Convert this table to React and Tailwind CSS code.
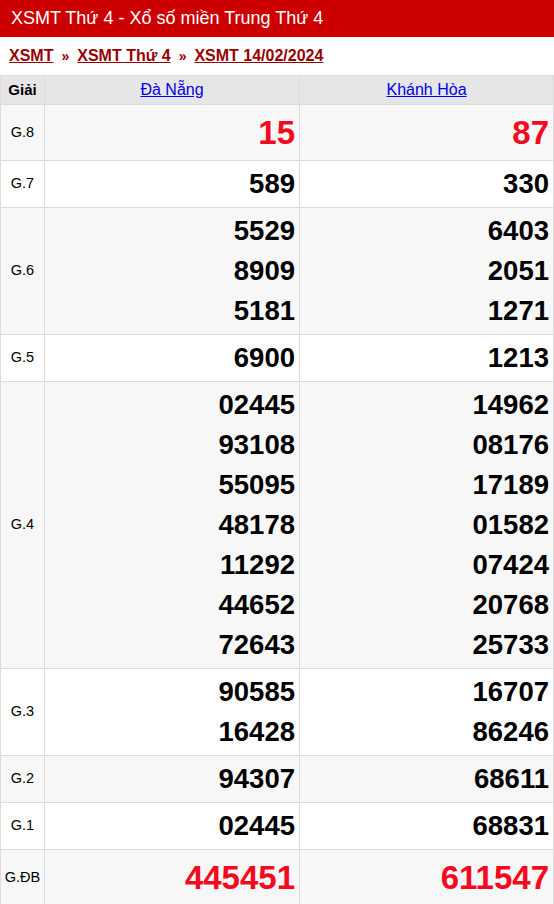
import React from "react";

const rows = [
  { label: "G.8", a: ["15"], b: ["87"], big: true },
  { label: "G.7", a: ["589"], b: ["330"] },
  { label: "G.6", a: ["5529", "8909", "5181"], b: ["6403", "2051", "1271"] },
  { label: "G.5", a: ["6900"], b: ["1213"] },
  {
    label: "G.4",
    a: ["02445", "93108", "55095", "48178", "11292", "44652", "72643"],
    b: ["14962", "08176", "17189", "01582", "07424", "20768", "25733"],
  },
  { label: "G.3", a: ["90585", "16428"], b: ["16707", "86246"] },
  { label: "G.2", a: ["94307"], b: ["68611"] },
  { label: "G.1", a: ["02445"], b: ["68831"] },
  { label: "G.ĐB", a: ["445451"], b: ["611547"], big: true },
];

function NumCell({ nums, big }) {
  return (
    <td className="border border-[#dcdcdc] px-[4px] py-[3px] text-right align-middle">
      {nums.map((n, i) => (
        <div
          key={i}
          className={
            big
              ? "text-[33px] leading-[49px] font-bold text-[#f5091f]"
              : "text-[27.5px] leading-[40px] font-bold text-black"
          }
        >
          {n}
        </div>
      ))}
    </td>
  );
}

export default function App() {
  return (
    <div className="w-[554px] bg-white font-['Liberation_Sans',Arial,sans-serif]">
      {/* Title bar */}
      <h1 className="h-[37px] bg-[#cc0000] pl-[11px] flex items-center text-[18px] text-white">
        XSMT Thứ 4 - Xổ số miền Trung Thứ 4
      </h1>

      {/* Breadcrumb */}
      <div className="h-[38px] flex items-center pl-[9px] text-[16px] font-bold text-[#990000]">
        <a href="#" className="underline">XSMT</a>
        <span className="mx-[8px] text-[14px]">»</span>
        <a href="#" className="underline">XSMT Thứ 4</a>
        <span className="mx-[8px] text-[14px]">»</span>
        <a href="#" className="underline">XSMT 14/02/2024</a>
      </div>

      <table className="w-full border-collapse table-fixed">
        <colgroup>
          <col className="w-[44px]" />
          <col className="w-[255px]" />
          <col />
        </colgroup>
        <thead>
          <tr className="bg-[#e6e6e6] h-[29px]">
            <th className="border border-[#dcdcdc] text-[15px] font-bold text-black">Giải</th>
            <th className="border border-[#dcdcdc] text-[16px] font-normal">
              <a href="#" className="text-[#0000ee] underline">Đà Nẵng</a>
            </th>
            <th className="border border-[#dcdcdc] text-[16px] font-normal">
              <a href="#" className="text-[#0000ee] underline">Khánh Hòa</a>
            </th>
          </tr>
        </thead>
        <tbody>
          {rows.map((r, i) => (
            <tr key={r.label} className={i % 2 === 0 ? "bg-[#f7f7f7]" : "bg-white"}>
              <td className="border border-[#dcdcdc] text-center text-[14.5px] text-black align-middle">
                {r.label}
              </td>
              <NumCell nums={r.a} big={r.big} />
              <NumCell nums={r.b} big={r.big} />
            </tr>
          ))}
        </tbody>
      </table>
    </div>
  );
}
